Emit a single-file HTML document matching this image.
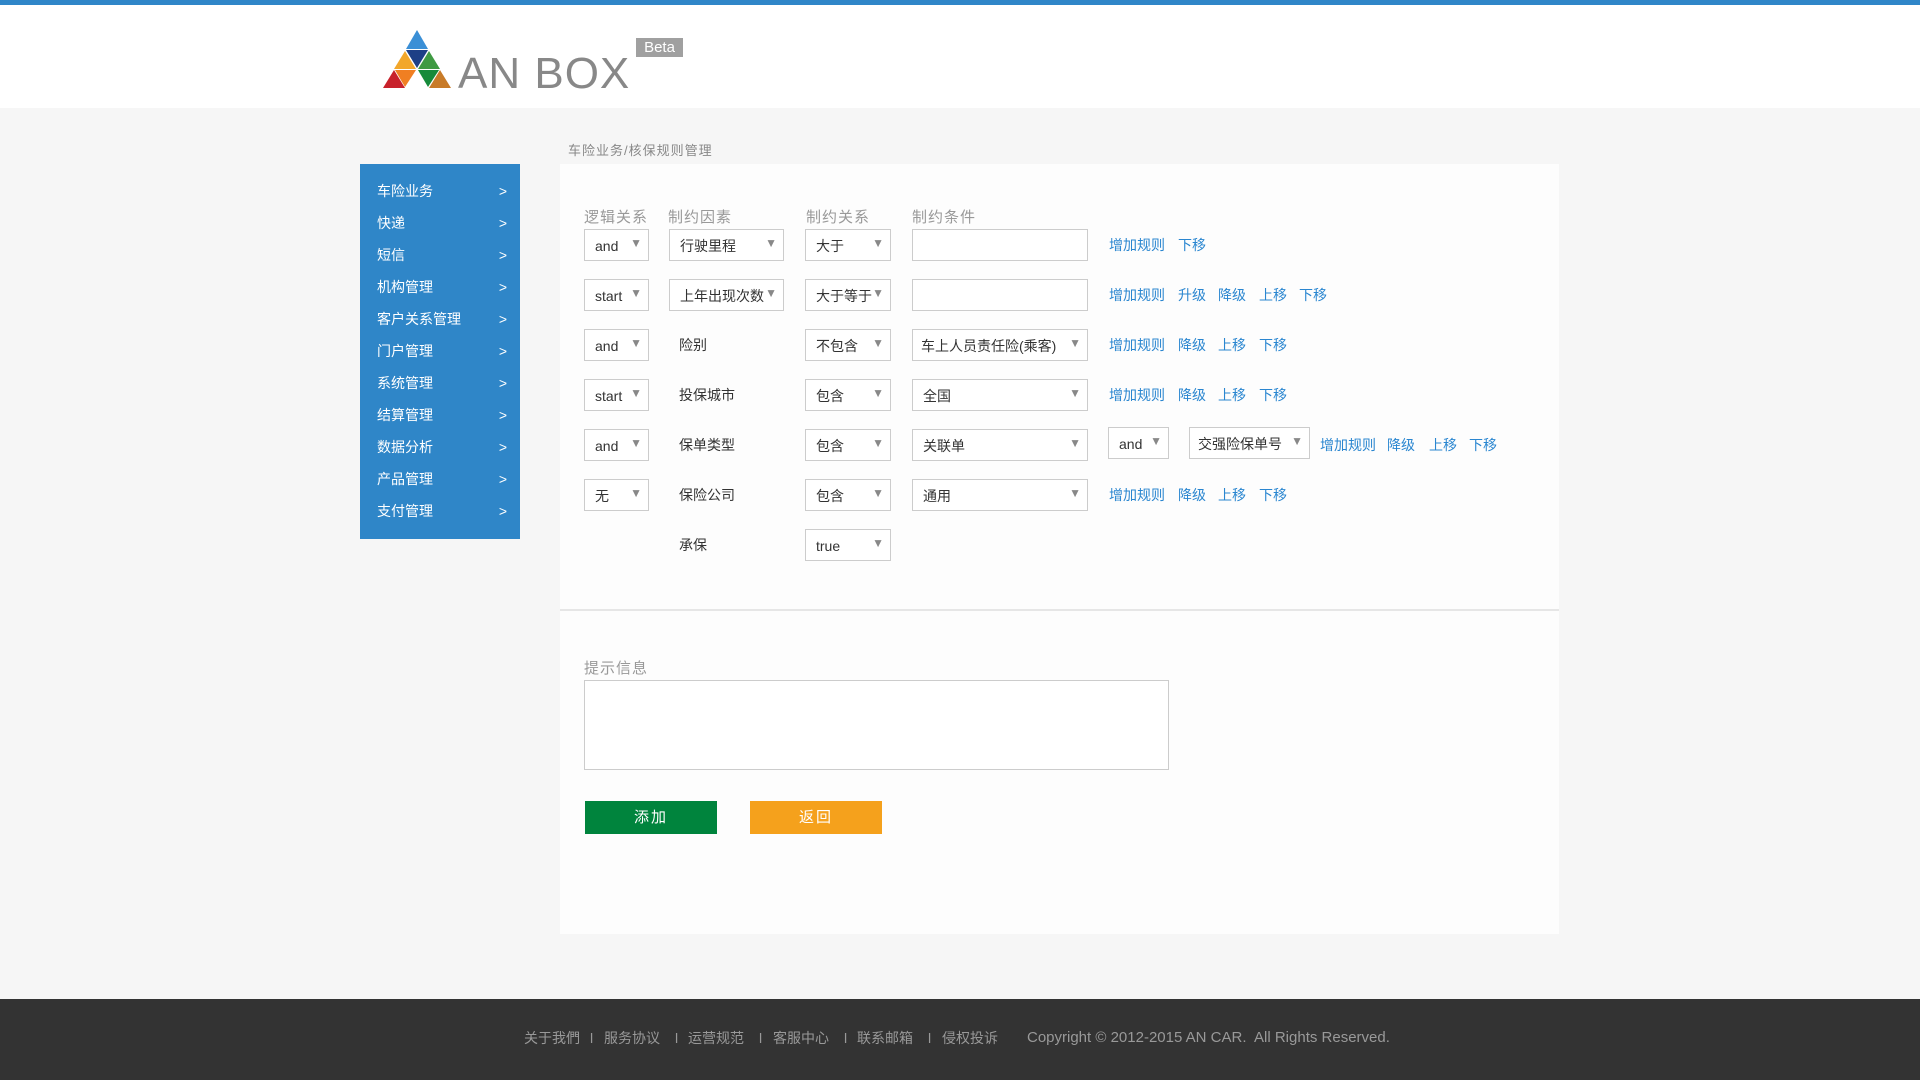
<!DOCTYPE html>
<html><head><meta charset="utf-8"><style>
*{margin:0;padding:0;box-sizing:border-box}
body{width:1920px;height:1080px;background:#f6f6f6;font-family:"Liberation Sans","Noto Sans CJK SC",sans-serif;position:relative;overflow:hidden;color:#333}
.a{position:absolute}
.top{left:0;top:0;width:1920px;height:5px;background:#2f86c8}
.hdr{left:0;top:5px;width:1920px;height:103px;background:#fff}
.side{left:360px;top:164px;width:160px;height:375px;background:#2f86c8}
.side div{position:absolute;left:17px;color:#fff;font-size:14px;width:130px;height:20px;line-height:20px}
.side div span{position:absolute;right:0;top:0;line-height:20px;font-family:"Liberation Sans",sans-serif}
.panel{left:560px;top:164px;width:999px;height:770px;background:#fdfdfd}
.lbl{font-size:15px;color:#999;letter-spacing:1px}
.s{position:absolute;height:32px;border:1px solid #ccc;background:#fff;font-size:14px;line-height:32px;padding-left:10px;color:#333;white-space:nowrap;overflow:hidden}
.s i{position:absolute;right:6px;top:-3px;font-style:normal;color:#888;font-size:12px}
.t{position:absolute;font-size:14px;line-height:32px;color:#333}
.lk{position:absolute;font-size:14px;line-height:32px;color:#2a86d0}
.ft{left:0;top:999px;width:1920px;height:81px;background:#333;color:#999;font-size:14px}
.ft div{position:absolute;top:29px;white-space:nowrap;line-height:20px}
</style></head><body>
<div class="a top"></div>
<div class="a hdr">
<svg class="a" style="left:383px;top:25px" width="68" height="58" viewBox="0 0 68 58">
<polygon points="34,0 45,19 23,19" fill="#3a8fd6"/>
<polygon points="23,20 45,20 34,38" fill="#1d3f86"/>
<polygon points="22,21 33,39 11,39" fill="#f2a72b"/>
<polygon points="46,21 57,39 35,39" fill="#3f9a42"/>
<polygon points="11,40 22,58 0,58" fill="#c8222b"/>
<polygon points="12,40 33,40 22,57" fill="#f07f22"/>
<polygon points="35,40 56,40 45,57" fill="#178a3a"/>
<polygon points="57,40 68,58 46,58" fill="#c87b28"/>
</svg>
<div class="a" style="left:458px;top:44px;font-family:'Liberation Sans',sans-serif;font-size:44px;color:#888;line-height:50px;letter-spacing:1px">AN BOX</div>
<div class="a" style="left:636px;top:33px;width:47px;height:19px;background:#a0a0a0;color:#fff;font-size:15px;line-height:19px;text-align:center">Beta</div>
</div>
<div class="a" style="left:568px;top:140px;font-size:13px;color:#888;letter-spacing:1px">车险业务/核保规则管理</div>
<div class="a side">
<div style="top:17px">车险业务<span>&gt;</span></div>
<div style="top:49px">快递<span>&gt;</span></div>
<div style="top:81px">短信<span>&gt;</span></div>
<div style="top:113px">机构管理<span>&gt;</span></div>
<div style="top:145px">客户关系管理<span>&gt;</span></div>
<div style="top:177px">门户管理<span>&gt;</span></div>
<div style="top:209px">系统管理<span>&gt;</span></div>
<div style="top:241px">结算管理<span>&gt;</span></div>
<div style="top:273px">数据分析<span>&gt;</span></div>
<div style="top:305px">产品管理<span>&gt;</span></div>
<div style="top:337px">支付管理<span>&gt;</span></div>
</div>
<div class="a panel"></div>
<div class="a" style="left:560px;top:609px;width:999px;height:2px;background:#e6e6e6"></div>
<div class="a lbl" style="left:584px;top:206px">逻辑关系</div>
<div class="a lbl" style="left:668px;top:206px">制约因素</div>
<div class="a lbl" style="left:806px;top:206px">制约关系</div>
<div class="a lbl" style="left:912px;top:206px">制约条件</div>

<div class="s" style="left:584px;top:229px;width:65px">and<i>▼</i></div>
<div class="s" style="left:669px;top:229px;width:115px">行驶里程<i>▼</i></div>
<div class="s" style="left:805px;top:229px;width:86px">大于<i>▼</i></div>
<div class="s" style="left:912px;top:229px;width:176px"></div>
<div class="lk" style="left:1109px;top:229px">增加规则</div><div class="lk" style="left:1178px;top:229px">下移</div>

<div class="s" style="left:584px;top:279px;width:65px">start<i>▼</i></div>
<div class="s" style="left:669px;top:279px;width:115px">上年出现次数<i>▼</i></div>
<div class="s" style="left:805px;top:279px;width:86px">大于等于<i>▼</i></div>
<div class="s" style="left:912px;top:279px;width:176px"></div>
<div class="lk" style="left:1109px;top:279px">增加规则</div><div class="lk" style="left:1178px;top:279px">升级</div><div class="lk" style="left:1218px;top:279px">降级</div><div class="lk" style="left:1259px;top:279px">上移</div><div class="lk" style="left:1299px;top:279px">下移</div>

<div class="s" style="left:584px;top:329px;width:65px">and<i>▼</i></div>
<div class="t" style="left:679px;top:329px">险别</div>
<div class="s" style="left:805px;top:329px;width:86px">不包含<i>▼</i></div>
<div class="s" style="left:912px;top:329px;width:176px;padding-left:8px">车上人员责任险(乘客)<i>▼</i></div>
<div class="lk" style="left:1109px;top:329px">增加规则</div><div class="lk" style="left:1178px;top:329px">降级</div><div class="lk" style="left:1218px;top:329px">上移</div><div class="lk" style="left:1259px;top:329px">下移</div>

<div class="s" style="left:584px;top:379px;width:65px">start<i>▼</i></div>
<div class="t" style="left:679px;top:379px">投保城市</div>
<div class="s" style="left:805px;top:379px;width:86px">包含<i>▼</i></div>
<div class="s" style="left:912px;top:379px;width:176px">全国<i>▼</i></div>
<div class="lk" style="left:1109px;top:379px">增加规则</div><div class="lk" style="left:1178px;top:379px">降级</div><div class="lk" style="left:1218px;top:379px">上移</div><div class="lk" style="left:1259px;top:379px">下移</div>

<div class="s" style="left:584px;top:429px;width:65px">and<i>▼</i></div>
<div class="t" style="left:679px;top:429px">保单类型</div>
<div class="s" style="left:805px;top:429px;width:86px">包含<i>▼</i></div>
<div class="s" style="left:912px;top:429px;width:176px">关联单<i>▼</i></div>
<div class="s" style="left:1108px;top:427px;width:61px">and<i>▼</i></div>
<div class="s" style="left:1189px;top:427px;width:121px;padding-left:8px">交强险保单号<i>▼</i></div>
<div class="lk" style="left:1320px;top:429px">增加规则</div><div class="lk" style="left:1387px;top:429px">降级</div><div class="lk" style="left:1429px;top:429px">上移</div><div class="lk" style="left:1469px;top:429px">下移</div>

<div class="s" style="left:584px;top:479px;width:65px">无<i>▼</i></div>
<div class="t" style="left:679px;top:479px">保险公司</div>
<div class="s" style="left:805px;top:479px;width:86px">包含<i>▼</i></div>
<div class="s" style="left:912px;top:479px;width:176px">通用<i>▼</i></div>
<div class="lk" style="left:1109px;top:479px">增加规则</div><div class="lk" style="left:1178px;top:479px">降级</div><div class="lk" style="left:1218px;top:479px">上移</div><div class="lk" style="left:1259px;top:479px">下移</div>

<div class="t" style="left:679px;top:529px">承保</div>
<div class="s" style="left:805px;top:529px;width:86px">true<i>▼</i></div>

<div class="a lbl" style="left:584px;top:657px">提示信息</div>
<div class="a" style="left:584px;top:680px;width:585px;height:90px;border:1px solid #ccc;background:#fff"></div>
<div class="a" style="left:585px;top:801px;width:132px;height:33px;background:#00843d;color:#fff;font-size:15px;line-height:33px;text-align:center;letter-spacing:2px">添加</div>
<div class="a" style="left:750px;top:801px;width:132px;height:33px;background:#f5a11c;color:#fff;font-size:15px;line-height:33px;text-align:center;letter-spacing:2px">返回</div>

<div class="a ft">
<div style="left:524px">关于我們</div><div style="left:590px">l</div>
<div style="left:604px">服务协议</div><div style="left:675px">l</div>
<div style="left:688px">运营规范</div><div style="left:759px">l</div>
<div style="left:773px">客服中心</div><div style="left:844px">l</div>
<div style="left:857px">联系邮箱</div><div style="left:928px">l</div>
<div style="left:942px">侵权投诉</div>
<div style="left:1027px;font-size:15px">Copyright © 2012-2015 AN CAR.&nbsp; All Rights Reserved.</div>
</div>
</body></html>
